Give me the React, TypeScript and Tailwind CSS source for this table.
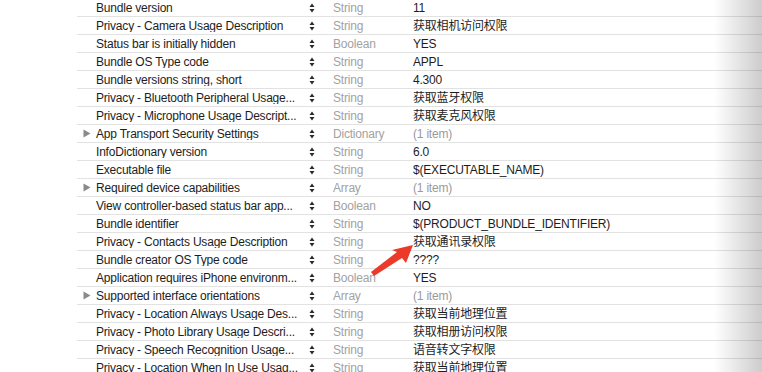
import React from 'react';

type Row = {
    key: string;
    type: string;
    value: string;
    group?: boolean;
};

// keys are written as Xcode shows them, cut to the column width
const rows: Row[] = [
    { key: 'Bundle version', type: 'String', value: '11' },
    { key: 'Privacy - Camera Usage Description', type: 'String', value: '获取相机访问权限' },
    { key: 'Status bar is initially hidden', type: 'Boolean', value: 'YES' },
    { key: 'Bundle OS Type code', type: 'String', value: 'APPL' },
    { key: 'Bundle versions string, short', type: 'String', value: '4.300' },
    { key: 'Privacy - Bluetooth Peripheral Usage...', type: 'String', value: '获取蓝牙权限' },
    { key: 'Privacy - Microphone Usage Descript...', type: 'String', value: '获取麦克风权限' },
    { key: 'App Transport Security Settings', type: 'Dictionary', value: '(1 item)', group: true },
    { key: 'InfoDictionary version', type: 'String', value: '6.0' },
    { key: 'Executable file', type: 'String', value: '$(EXECUTABLE_NAME)' },
    { key: 'Required device capabilities', type: 'Array', value: '(1 item)', group: true },
    { key: 'View controller-based status bar app...', type: 'Boolean', value: 'NO' },
    { key: 'Bundle identifier', type: 'String', value: '$(PRODUCT_BUNDLE_IDENTIFIER)' },
    { key: 'Privacy - Contacts Usage Description', type: 'String', value: '获取通讯录权限' },
    { key: 'Bundle creator OS Type code', type: 'String', value: '????' },
    { key: 'Application requires iPhone environm...', type: 'Boolean', value: 'YES' },
    { key: 'Supported interface orientations', type: 'Array', value: '(1 item)', group: true },
    { key: 'Privacy - Location Always Usage Des...', type: 'String', value: '获取当前地理位置' },
    { key: 'Privacy - Photo Library Usage Descri...', type: 'String', value: '获取相册访问权限' },
    { key: 'Privacy - Speech Recognition Usage...', type: 'String', value: '语音转文字权限' },
    { key: 'Privacy - Location When In Use Usag...', type: 'String', value: '获取当前地理位置' },
];

function Stepper() {
    return (
        <svg width="6" height="10" viewBox="0 0 6 10" className="shrink-0">
            <path d="M3 0.5 L5.5 4 L0.5 4 Z" fill="#2a2a2a" />
            <path d="M0.5 6 L5.5 6 L3 9.5 Z" fill="#2a2a2a" />
        </svg>
    );
}

function PlistRow({ row }: { row: Row }) {
    return (
        <div className="flex h-[18px] items-center border-b border-[#e2e2e2]">
            <div className="flex w-[19px] shrink-0 items-center justify-center pl-[1px]">
                {row.group && (
                    <svg width="8" height="9" viewBox="0 0 8 9">
                        <path d="M0.5 0.5 L7.5 4.5 L0.5 8.5 Z" fill="#8a8a8a" />
                    </svg>
                )}
            </div>
            <div className="w-[206px] shrink-0 truncate text-[#1d1d1d]">{row.key}</div>
            <div className="flex w-[29px] shrink-0 items-center justify-start pl-[7px]">
                <Stepper />
            </div>
            <div className="w-[82px] shrink-0 pl-[2px] text-[#a2a2a2]">{row.type}</div>
            <div className={row.value.startsWith('(') ? 'text-[#9a9a9a]' : 'text-[#1d1d1d]'}>{row.value}</div>
        </div>
    );
}

export default function App() {
    return (
        <div className="relative h-[372px] w-[762px] overflow-hidden bg-white font-['Liberation_Sans','Noto_Sans_CJK_SC',sans-serif] text-[12px] leading-none tracking-[-0.2px]">
            <div className="-mt-px pl-[77px]">
                {rows.map((row) => (
                    <PlistRow key={row.key} row={row} />
                ))}
            </div>
            <div className="pointer-events-none absolute right-0 top-0 h-full w-[48px] bg-gradient-to-r from-transparent to-black/20" />
            <svg className="pointer-events-none absolute left-0 top-0" width="762" height="372">
                <path d="M371 272 L397 252 L392 250 L413 245 L406 263 L402 258 L374 276 Z" fill="#ec3a2a" />
            </svg>
        </div>
    );
}
